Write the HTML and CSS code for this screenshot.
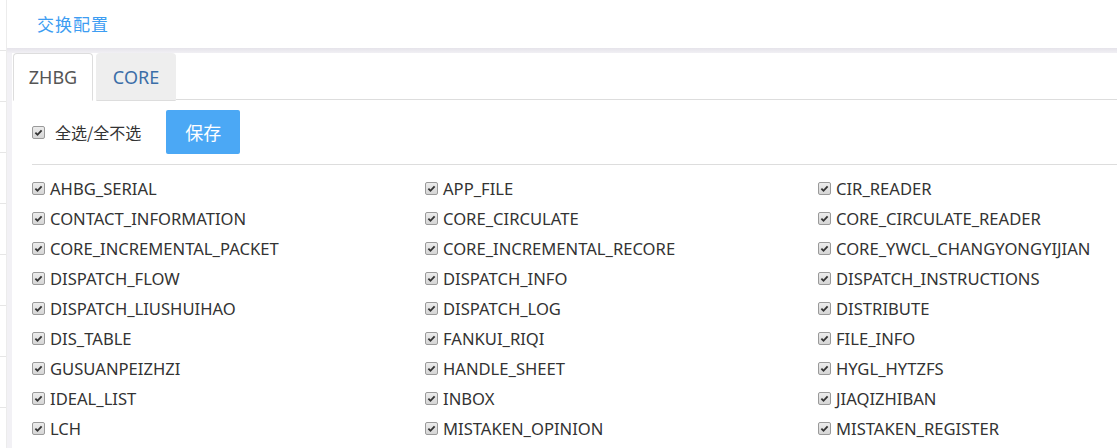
FILE: index.html
```html
<!DOCTYPE html>
<html lang="zh-CN">
<head>
<meta charset="utf-8">
<title>交换配置</title>
<link rel="stylesheet" href="styles.css">
</head>
<body>
<div class="page">
  <aside class="side">
    <div class="side-cell"></div>
    <div class="side-cell"></div>
    <div class="side-cell"></div>
    <div class="side-cell"></div>
    <div class="side-cell"></div>
    <div class="side-cell"></div>
    <div class="side-cell"></div>
    <div class="side-cell"></div>
    <div class="side-cell"></div>
  </aside>
  <main class="main">
    <header class="header"><span class="title">交换配置</span></header>
    <div class="shadow"></div>
    <section class="panel">
      <nav class="tabs">
        <div class="tab active">ZHBG</div>
        <div class="tab">CORE</div>
        <div class="tab-fill"></div>
      </nav>
      <div class="content">
        <div class="toolbar">
          <span class="cb"><svg viewBox="0 0 12 12" width="12" height="12"><path d="M2.6 6.2 L4.9 8.5 L9.4 3.6" fill="none" stroke="#333" stroke-width="2"/></svg></span>
          <span class="all-label">全选/全不选</span>
          <button class="save">保存</button>
        </div>
        <div class="divider"></div>
        <div class="grid">
          <label class="item"><span class="cb"><svg viewBox="0 0 12 12" width="12" height="12"><path d="M2.6 6.2 L4.9 8.5 L9.4 3.6" fill="none" stroke="#333" stroke-width="2"/></svg></span>AHBG_SERIAL</label>
          <label class="item"><span class="cb"><svg viewBox="0 0 12 12" width="12" height="12"><path d="M2.6 6.2 L4.9 8.5 L9.4 3.6" fill="none" stroke="#333" stroke-width="2"/></svg></span>APP_FILE</label>
          <label class="item"><span class="cb"><svg viewBox="0 0 12 12" width="12" height="12"><path d="M2.6 6.2 L4.9 8.5 L9.4 3.6" fill="none" stroke="#333" stroke-width="2"/></svg></span>CIR_READER</label>
          <label class="item"><span class="cb"><svg viewBox="0 0 12 12" width="12" height="12"><path d="M2.6 6.2 L4.9 8.5 L9.4 3.6" fill="none" stroke="#333" stroke-width="2"/></svg></span>CONTACT_INFORMATION</label>
          <label class="item"><span class="cb"><svg viewBox="0 0 12 12" width="12" height="12"><path d="M2.6 6.2 L4.9 8.5 L9.4 3.6" fill="none" stroke="#333" stroke-width="2"/></svg></span>CORE_CIRCULATE</label>
          <label class="item"><span class="cb"><svg viewBox="0 0 12 12" width="12" height="12"><path d="M2.6 6.2 L4.9 8.5 L9.4 3.6" fill="none" stroke="#333" stroke-width="2"/></svg></span>CORE_CIRCULATE_READER</label>
          <label class="item"><span class="cb"><svg viewBox="0 0 12 12" width="12" height="12"><path d="M2.6 6.2 L4.9 8.5 L9.4 3.6" fill="none" stroke="#333" stroke-width="2"/></svg></span>CORE_INCREMENTAL_PACKET</label>
          <label class="item"><span class="cb"><svg viewBox="0 0 12 12" width="12" height="12"><path d="M2.6 6.2 L4.9 8.5 L9.4 3.6" fill="none" stroke="#333" stroke-width="2"/></svg></span>CORE_INCREMENTAL_RECORE</label>
          <label class="item"><span class="cb"><svg viewBox="0 0 12 12" width="12" height="12"><path d="M2.6 6.2 L4.9 8.5 L9.4 3.6" fill="none" stroke="#333" stroke-width="2"/></svg></span>CORE_YWCL_CHANGYONGYIJIAN</label>
          <label class="item"><span class="cb"><svg viewBox="0 0 12 12" width="12" height="12"><path d="M2.6 6.2 L4.9 8.5 L9.4 3.6" fill="none" stroke="#333" stroke-width="2"/></svg></span>DISPATCH_FLOW</label>
          <label class="item"><span class="cb"><svg viewBox="0 0 12 12" width="12" height="12"><path d="M2.6 6.2 L4.9 8.5 L9.4 3.6" fill="none" stroke="#333" stroke-width="2"/></svg></span>DISPATCH_INFO</label>
          <label class="item"><span class="cb"><svg viewBox="0 0 12 12" width="12" height="12"><path d="M2.6 6.2 L4.9 8.5 L9.4 3.6" fill="none" stroke="#333" stroke-width="2"/></svg></span>DISPATCH_INSTRUCTIONS</label>
          <label class="item"><span class="cb"><svg viewBox="0 0 12 12" width="12" height="12"><path d="M2.6 6.2 L4.9 8.5 L9.4 3.6" fill="none" stroke="#333" stroke-width="2"/></svg></span>DISPATCH_LIUSHUIHAO</label>
          <label class="item"><span class="cb"><svg viewBox="0 0 12 12" width="12" height="12"><path d="M2.6 6.2 L4.9 8.5 L9.4 3.6" fill="none" stroke="#333" stroke-width="2"/></svg></span>DISPATCH_LOG</label>
          <label class="item"><span class="cb"><svg viewBox="0 0 12 12" width="12" height="12"><path d="M2.6 6.2 L4.9 8.5 L9.4 3.6" fill="none" stroke="#333" stroke-width="2"/></svg></span>DISTRIBUTE</label>
          <label class="item"><span class="cb"><svg viewBox="0 0 12 12" width="12" height="12"><path d="M2.6 6.2 L4.9 8.5 L9.4 3.6" fill="none" stroke="#333" stroke-width="2"/></svg></span>DIS_TABLE</label>
          <label class="item"><span class="cb"><svg viewBox="0 0 12 12" width="12" height="12"><path d="M2.6 6.2 L4.9 8.5 L9.4 3.6" fill="none" stroke="#333" stroke-width="2"/></svg></span>FANKUI_RIQI</label>
          <label class="item"><span class="cb"><svg viewBox="0 0 12 12" width="12" height="12"><path d="M2.6 6.2 L4.9 8.5 L9.4 3.6" fill="none" stroke="#333" stroke-width="2"/></svg></span>FILE_INFO</label>
          <label class="item"><span class="cb"><svg viewBox="0 0 12 12" width="12" height="12"><path d="M2.6 6.2 L4.9 8.5 L9.4 3.6" fill="none" stroke="#333" stroke-width="2"/></svg></span>GUSUANPEIZHZI</label>
          <label class="item"><span class="cb"><svg viewBox="0 0 12 12" width="12" height="12"><path d="M2.6 6.2 L4.9 8.5 L9.4 3.6" fill="none" stroke="#333" stroke-width="2"/></svg></span>HANDLE_SHEET</label>
          <label class="item"><span class="cb"><svg viewBox="0 0 12 12" width="12" height="12"><path d="M2.6 6.2 L4.9 8.5 L9.4 3.6" fill="none" stroke="#333" stroke-width="2"/></svg></span>HYGL_HYTZFS</label>
          <label class="item"><span class="cb"><svg viewBox="0 0 12 12" width="12" height="12"><path d="M2.6 6.2 L4.9 8.5 L9.4 3.6" fill="none" stroke="#333" stroke-width="2"/></svg></span>IDEAL_LIST</label>
          <label class="item"><span class="cb"><svg viewBox="0 0 12 12" width="12" height="12"><path d="M2.6 6.2 L4.9 8.5 L9.4 3.6" fill="none" stroke="#333" stroke-width="2"/></svg></span>INBOX</label>
          <label class="item"><span class="cb"><svg viewBox="0 0 12 12" width="12" height="12"><path d="M2.6 6.2 L4.9 8.5 L9.4 3.6" fill="none" stroke="#333" stroke-width="2"/></svg></span>JIAQIZHIBAN</label>
          <label class="item"><span class="cb"><svg viewBox="0 0 12 12" width="12" height="12"><path d="M2.6 6.2 L4.9 8.5 L9.4 3.6" fill="none" stroke="#333" stroke-width="2"/></svg></span>LCH</label>
          <label class="item"><span class="cb"><svg viewBox="0 0 12 12" width="12" height="12"><path d="M2.6 6.2 L4.9 8.5 L9.4 3.6" fill="none" stroke="#333" stroke-width="2"/></svg></span>MISTAKEN_OPINION</label>
          <label class="item"><span class="cb"><svg viewBox="0 0 12 12" width="12" height="12"><path d="M2.6 6.2 L4.9 8.5 L9.4 3.6" fill="none" stroke="#333" stroke-width="2"/></svg></span>MISTAKEN_REGISTER</label>
        </div>
      </div>
    </section>
  </main>
</div>
</body>
</html>
```

FILE: styles.css
```css
html, body {
  margin: 0;
  padding: 0;
  width: 1117px;
  height: 448px;
  overflow: hidden;
  background: #fff;
  font-family: "Noto Sans", "Noto Sans CJK SC", sans-serif;
  color: #333;
}

.page {
  display: flex;
  width: 1117px;
  height: 448px;
  overflow: hidden;
}

.side {
  width: 6px;
  flex: none;
  border-right: 1px solid #ececec;
  background: #fff;
  display: flex;
  flex-direction: column;
}

.side-cell {
  height: 50px;
  flex: none;
  border-bottom: 1px solid #e6e6e6;
}

.main {
  flex: 1;
  display: flex;
  flex-direction: column;
  background: #f2f1f5;
  min-width: 0;
  overflow: hidden;
}

.header {
  height: 48px;
  flex: none;
  background: #fff;
  display: flex;
  align-items: center;
  padding-left: 30px;
}

.title {
  font-family: "Noto Sans CJK SC", sans-serif;
  font-size: 17px;
  color: #3d9df2;
  letter-spacing: 1px;
  margin-top: -1px;
}

.shadow {
  height: 5px;
  flex: none;
  background: linear-gradient(#e5e3ea, #f1f0f4);
}

.panel {
  flex: 1;
  margin-left: 5px;
  background: #fff;
  display: flex;
  flex-direction: column;
  min-width: 0;
}

.tabs {
  display: flex;
  height: 47px;
  padding-left: 1px;
  flex: none;
}

.tab {
  width: 78px;
  height: 46px;
  margin-right: 3px;
  display: flex;
  align-items: center;
  justify-content: center;
  font-family: "Noto Sans", sans-serif;
  font-size: 18px;
  color: #3b6ea8;
  background: #eeeeee;
  border: 1px solid #eeeeee;
  border-bottom: 1px solid #dddddd;
  border-radius: 4px 4px 0 0;
  box-sizing: content-box;
}

.tab.active {
  color: #555;
  background: #fff;
  border-color: #dddddd;
  border-bottom-color: #fff;
}

.tab-fill {
  flex: 1;
  border-bottom: 1px solid #dddddd;
  margin-left: -3px;
}

.content {
  padding-left: 20px;
}

.toolbar {
  display: flex;
  align-items: center;
  height: 44px;
  margin-top: 10px;
}

.cb {
  width: 11px;
  height: 11px;
  flex: none;
  border: 1px solid #9a9a9a;
  border-radius: 2px;
  background: linear-gradient(#ececec, #d6d6d6);
  display: inline-flex;
  align-items: center;
  justify-content: center;
}

.cb svg {
  display: block;
  width: 11px;
  height: 11px;
}

.all-label {
  font-family: "Noto Sans CJK SC", sans-serif;
  font-size: 16px;
  color: #333;
  margin-left: 10px;
}

.save {
  margin-left: 25px;
  width: 74px;
  height: 44px;
  border: none;
  border-radius: 2px;
  background: #4ba8f5;
  color: #fff;
  font-family: "Noto Sans CJK SC", sans-serif;
  font-size: 18px;
  padding: 0;
}

.divider {
  height: 1px;
  background: #dddddd;
  margin-top: 10px;
}

.grid {
  display: grid;
  grid-template-columns: repeat(3, 393px);
  padding-top: 8px;
}

.item {
  display: flex;
  align-items: center;
  height: 30px;
  font-size: 16.6px;
  color: #333;
  white-space: nowrap;
}

.item .cb {
  margin-right: 5px;
}
```
